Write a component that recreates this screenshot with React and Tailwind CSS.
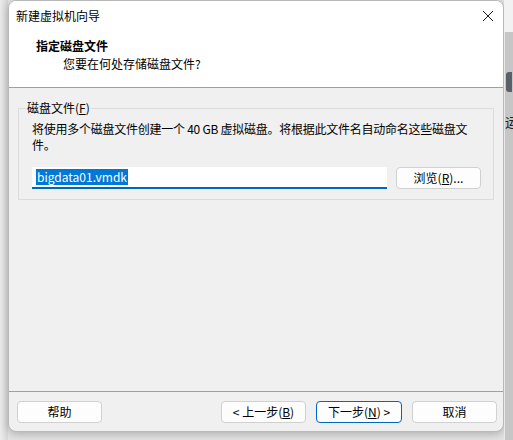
import React from 'react';

const font = { fontFamily: '"Microsoft YaHei UI", "Noto Sans CJK SC", "Noto Sans", sans-serif' };

function Btn({ children, primary }) {
  return (
    <button
      className={
        primary
          ? 'w-[86px] h-[22px] rounded-[4px] border border-[#0067c0] bg-[#fdfdfd] text-[12px] text-black flex items-center justify-center'
          : 'w-[85px] h-[22px] rounded-[4px] border border-[#d0d0d0] bg-[#fdfdfd] text-[12px] text-black flex items-center justify-center'
      }
    >
      {children}
    </button>
  );
}

function Dialog() {
  return (
    <div className="w-[496px] h-[432px] flex flex-col rounded-[8px] border border-[#b8b8b8] bg-[#f0f0f0] shadow-[0_2px_10px_rgba(0,0,0,0.25)] overflow-hidden">
      {/* header */}
      <div className="h-[87px] bg-white border-b border-[#a0a0a0] flex flex-col">
        <div className="h-[29px] flex items-center justify-between pl-[7px] pr-[8px]">
          <span className="text-[12px] text-black">新建虚拟机向导</span>
          <svg width="12" height="12" viewBox="0 0 12 12" className="mr-[1px]">
            <path d="M1 1 L11 11 M11 1 L1 11" stroke="#1a1a1a" strokeWidth="1" />
          </svg>
        </div>
        <div className="pl-[27px] pt-[7px] text-[12px] font-bold text-black leading-[18px]">指定磁盘文件</div>
        <div className="pl-[54px] text-[12px] text-black leading-[18px]">您要在何处存储磁盘文件?</div>
      </div>

      {/* body */}
      <div className="flex-1 flex flex-col px-[9px] pt-[20px]">
        <div className="relative h-[92px] border border-[#dcdcdc] flex flex-col pl-[13px] pr-[10px] pt-[12px]">
          <span className="absolute -top-[9px] left-[7px] px-[1px] bg-[#f0f0f0] text-[12px] leading-[16px] text-black">
            磁盘文件(<span className="underline">F</span>)
          </span>
          <p className="text-[12px] leading-[16px] tracking-[-0.25px] text-black whitespace-nowrap">
            将使用多个磁盘文件创建一个 40 GB 虚拟磁盘。将根据此文件名自动命名这些磁盘文
            <br />
            件。
          </p>
          <div className="flex items-center gap-[9px] mt-[14px]">
            <div className="w-[355px] h-[22px] bg-white border-b-2 border-[#0067c0] flex items-center pl-[4px]">
              <span className="bg-[#0078d7] text-white text-[12px] leading-[16px] px-[1px]">bigdata01.vmdk</span>
            </div>
            <Btn>
              浏览(<span className="underline">R</span>)...
            </Btn>
          </div>
        </div>
      </div>

      {/* footer */}
      <div className="h-[40px] border-t border-[#a0a0a0] flex items-start pt-[9px] pl-[8px] pr-[6px]">
        <Btn>帮助</Btn>
        <div className="flex-1" />
        <div className="flex gap-[10px]">
          <Btn>
            &lt; 上一步(<span className="underline">B</span>)
          </Btn>
          <Btn primary>
            下一步(<span className="underline">N</span>) &gt;
          </Btn>
          <Btn>取消</Btn>
        </div>
      </div>
    </div>
  );
}

export default function App() {
  return (
    <div className="w-[513px] h-[440px] flex bg-[#e4e4e4] overflow-hidden" style={font}>
      <div className="w-[8px] bg-gradient-to-r from-[#ececec] to-[#d8d8d8]" />
      <Dialog />
      <div className="w-[9px] flex flex-col">
        <div className="h-[32px] bg-[#f2f2f2]" />
        <div className="flex-1 bg-[#c6c6c6] border-l border-[#e8e8e8] flex flex-col">
          <div className="h-[20px] mt-[40px] bg-[#5a6068] w-[6px] ml-[1px] rounded-l-[3px]" />
          <div className="mt-[22px] text-[13px] leading-[16px] text-[#222] whitespace-nowrap overflow-hidden w-[8px]">运</div>
        </div>
      </div>
    </div>
  );
}
